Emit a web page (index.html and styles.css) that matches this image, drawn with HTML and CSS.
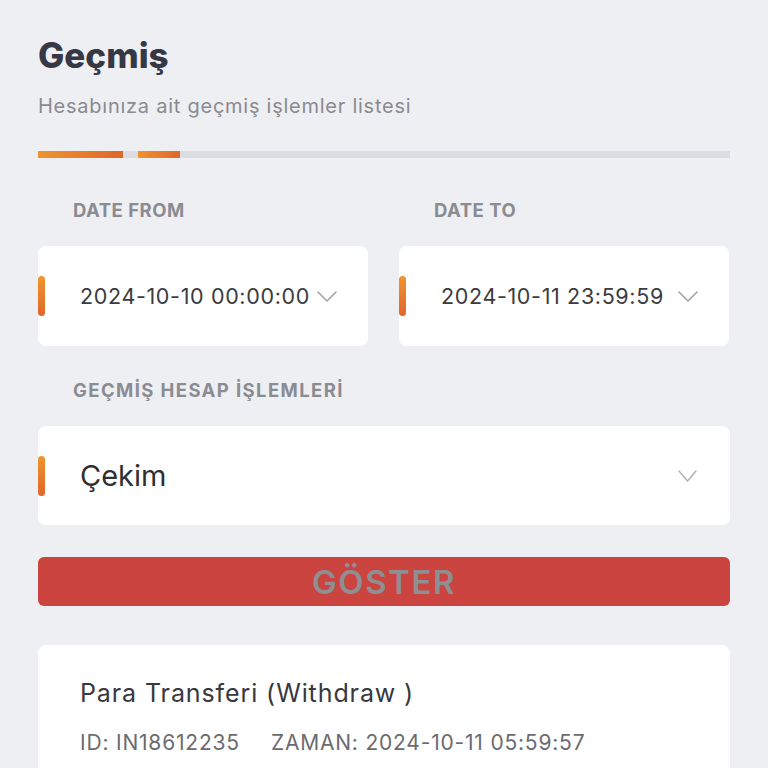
FILE: index.html
```html
<!DOCTYPE html>
<html lang="tr">
<head>
<meta charset="utf-8">
<title>Geçmiş</title>
<link rel="stylesheet" href="styles.css">
</head>
<body>
<main class="page">
  <h1 class="title">Geçmiş</h1>
  <p class="subtitle">Hesabınıza ait geçmiş işlemler listesi</p>
  <div class="progress">
    <span class="seg seg-a"></span>
    <span class="gap"></span>
    <span class="seg seg-b"></span>
    <span class="rest"></span>
  </div>

  <div class="dates">
    <div class="field">
      <div class="label">DATE FROM</div>
      <div class="box date-box">
        <span class="accent"></span>
        <span class="value">2024-10-10 00:00:00</span>
        <svg class="chev" width="20" height="11" viewBox="0 0 20 11"><path d="M1 1 L10 10 L19 1" fill="none" stroke="#a3a3a8" stroke-width="1.6" stroke-linecap="round" stroke-linejoin="round"/></svg>
      </div>
    </div>
    <div class="field">
      <div class="label">DATE TO</div>
      <div class="box date-box">
        <span class="accent"></span>
        <span class="value">2024-10-11 23:59:59</span>
        <svg class="chev" width="20" height="11" viewBox="0 0 20 11"><path d="M1 1 L10 10 L19 1" fill="none" stroke="#a3a3a8" stroke-width="1.6" stroke-linecap="round" stroke-linejoin="round"/></svg>
      </div>
    </div>
  </div>

  <div class="label label-wide">GEÇMİŞ HESAP İŞLEMLERİ</div>
  <div class="box select-box">
    <span class="accent"></span>
    <span class="select-value">Çekim</span>
    <svg class="chev chev-select" width="19" height="12" viewBox="0 0 19 12"><path d="M1 1 L9.5 11 L18 1" fill="none" stroke="#aeaeb3" stroke-width="1.4" stroke-linecap="round" stroke-linejoin="round"/></svg>
  </div>

  <button class="btn" type="button">GÖSTER</button>

  <section class="card">
    <div class="card-title">Para Transferi (Withdraw )</div>
    <div class="card-meta"><span>ID: IN18612235</span><span>ZAMAN: 2024-10-11 05:59:57</span></div>
  </section>
</main>
</body>
</html>
```

FILE: styles.css
```css
* { box-sizing: border-box; }
html, body {
  margin: 0;
  padding: 0;
  background: #eeeff3;
  font-family: Inter, "Noto Sans", "Liberation Sans", sans-serif;
  height: 768px;
  overflow: hidden;
}
.page {
  padding: 0 38px 0 38px;
  width: 768px;
}
.title {
  margin: 34px 0 0 0;
  font-size: 35px;
  line-height: 42px;
  font-weight: 800;
  color: #363846;
  letter-spacing: 0;
}
.subtitle {
  margin: 18px 0 0 0;
  font-size: 20px;
  line-height: 24px;
  color: #8a8a90;
  letter-spacing: 0.75px;
}
.progress {
  margin-top: 33px;
  height: 7px;
  display: flex;
}
.progress .seg {
  background: linear-gradient(90deg, #ee9430, #e0662a);
}
.seg-a { width: 85px; }
.gap { width: 15px; background: #dcdde2; }
.seg-b { width: 42px; }
.rest { flex: 1; background: #dcdde2; }

.dates {
  display: grid;
  grid-template-columns: 330px 330px;
  column-gap: 31px;
  margin-top: 42px;
}
.label {
  padding-left: 35px;
  font-size: 18.5px;
  line-height: 20px;
  font-weight: 700;
  color: #8b8b92;
  letter-spacing: 0.5px;
}
.box {
  position: relative;
  background: #fff;
  border-radius: 8px;
  display: flex;
  align-items: center;
  justify-content: space-between;
}
.date-box {
  margin-top: 26px;
  height: 100px;
  padding: 0 31px 0 42px;
}
.accent {
  position: absolute;
  left: 0;
  top: 50%;
  margin-top: -20px;
  width: 7px;
  height: 40px;
  border-radius: 4px;
  background: linear-gradient(180deg, #f0952f, #e0662a);
}
.value {
  font-size: 21.5px;
  color: #3b3b40;
  white-space: nowrap;
  letter-spacing: 0.65px;
}
.chev { flex: none; display: block; }

.label-wide {
  margin-top: 34px;
  letter-spacing: 1.4px;
}
.select-box {
  margin-top: 26px;
  height: 99px;
  padding: 0 33px 0 42px;
}
.select-value {
  font-size: 29px;
  color: #2f2f34;
}
.btn {
  display: block;
  width: 100%;
  margin-top: 32px;
  height: 49px;
  border: none;
  border-radius: 6px;
  background: #cc4440;
  color: #8e8e93;
  font-family: Inter, "Noto Sans", sans-serif;
  font-size: 33px;
  font-weight: 600;
  letter-spacing: 1.5px;
  padding: 0;
}
.card {
  margin-top: 39px;
  background: #fff;
  border-radius: 8px;
  padding: 33px 42px 30px 42px;
  height: 200px;
}
.card-title {
  font-size: 25px;
  line-height: 30px;
  color: #38383d;
  letter-spacing: 0.9px;
}
.card-meta {
  margin-top: 23px;
  font-size: 21px;
  line-height: 24px;
  color: #6b6b70;
  display: flex;
  gap: 31px;
  letter-spacing: 0.8px;
}
```
